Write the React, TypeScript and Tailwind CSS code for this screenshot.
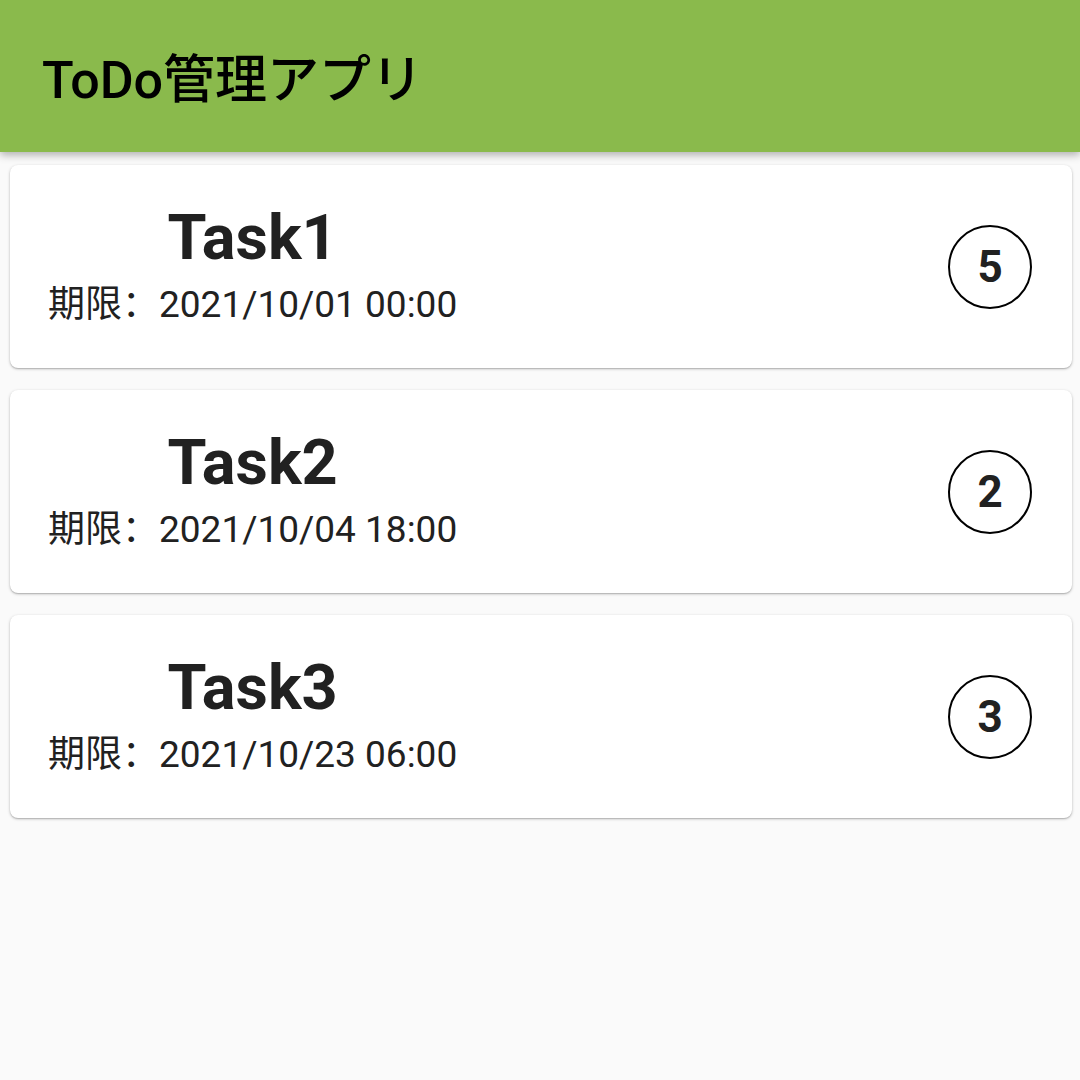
import React from "react";

type Task = {
  name: string;
  deadline: string;
  priority: number;
};

const tasks: Task[] = [
  { name: "Task1", deadline: "2021/10/01 00:00", priority: 5 },
  { name: "Task2", deadline: "2021/10/04 18:00", priority: 2 },
  { name: "Task3", deadline: "2021/10/23 06:00", priority: 3 },
];

const font = "font-['Roboto','Noto_Sans_CJK_JP',sans-serif]";

function TaskCard({ task }: { task: Task }) {
  return (
    <div className="ml-[10px] mr-[8px] flex h-[203px] items-center justify-between rounded-[8px] bg-white pl-[38px] pr-[40px] shadow-[0_1px_3px_rgba(0,0,0,0.25),0_1px_1px_rgba(0,0,0,0.12)]">
      <div className="flex flex-col items-center">
        <span className="text-[63px] leading-[62px] font-bold text-[#212121]">
          {task.name}
        </span>
        <span className="mt-[10px] text-[37px] leading-[44px] text-[#212121]">
          <span className="font-['Noto_Sans_CJK_SC',sans-serif]">期限：</span>
          {task.deadline}
        </span>
      </div>
      <div className="flex size-[84px] items-center justify-center rounded-full border-2 border-black">
        <span className="text-[44px] leading-none font-bold text-[#212121]">
          {task.priority}
        </span>
      </div>
    </div>
  );
}

export default function App() {
  return (
    <div className={`min-h-[1080px] bg-[#fafafa] ${font}`}>
      <header className="relative z-10 flex h-[152px] items-center bg-[#8aba4c] px-[42px] pt-[10px] shadow-[0_3px_8px_rgba(0,0,0,0.3)]">
        <h1 className="text-[52px] leading-none font-medium text-black">
          ToDo管理アプリ
        </h1>
      </header>
      <main className="flex flex-col gap-[22px] pt-[13px]">
        {tasks.map((task) => (
          <TaskCard key={task.name} task={task} />
        ))}
      </main>
    </div>
  );
}
